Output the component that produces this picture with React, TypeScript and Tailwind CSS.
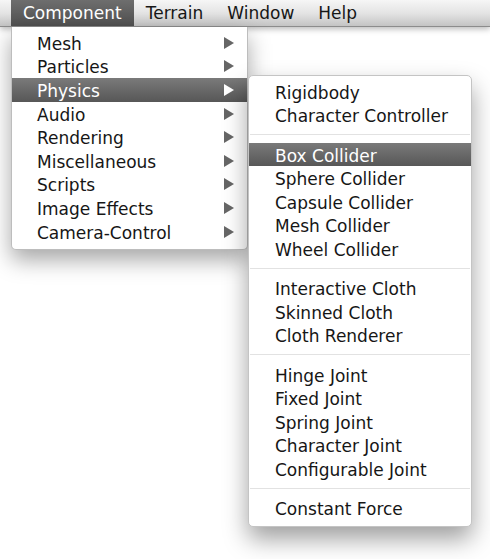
import React from 'react';

const barItems = ['Component', 'Terrain', 'Window', 'Help'];

const mainItems = [
    'Mesh',
    'Particles',
    'Physics',
    'Audio',
    'Rendering',
    'Miscellaneous',
    'Scripts',
    'Image Effects',
    'Camera-Control',
];

// groups of the Physics submenu, split by separators
const physicsGroups = [
    ['Rigidbody', 'Character Controller'],
    ['Box Collider', 'Sphere Collider', 'Capsule Collider', 'Mesh Collider', 'Wheel Collider'],
    ['Interactive Cloth', 'Skinned Cloth', 'Cloth Renderer'],
    ['Hinge Joint', 'Fixed Joint', 'Spring Joint', 'Character Joint', 'Configurable Joint'],
    ['Constant Force'],
];

function Arrow({ light }: { light?: boolean }) {
    return (
        <svg width="10" height="12" viewBox="0 0 10 12" className="shrink-0">
            <path d="M0 0 L10 6 L0 12 Z" fill={light ? '#ffffff' : '#666666'} />
        </svg>
    );
}

function Row({ label, active, arrow, pl }: { label: string; active?: boolean; arrow?: boolean; pl: string }) {
    return (
        <div
            className={`h-[23.6px] flex items-center justify-between pr-[13px] ${pl} ${
                active
                    ? 'bg-gradient-to-b from-[#7a7a7a] to-[#575757] text-white'
                    : 'text-[#161616]'
            }`}
        >
            <span className="leading-none pt-[3px]">{label}</span>
            {arrow && <Arrow light={active} />}
        </div>
    );
}

export default function App() {
    return (
        <div className="relative w-[490px] h-[559px] bg-white overflow-hidden font-['DejaVu_Sans',sans-serif] text-[17px]">
            {/* menu bar */}
            <div className="h-[27px] flex items-stretch pl-[11px] bg-gradient-to-b from-[#f6f6f6] via-[#e4e4e4] to-[#c4c4c4] border-b border-[#8c8c8c] shadow-[0_2px_6px_rgba(0,0,0,0.28)]">
                {barItems.map((item, i) => (
                    <div
                        key={item}
                        className={`px-[12px] flex items-center leading-none ${
                            i === 0
                                ? 'bg-gradient-to-b from-[#6e6e6e] to-[#505050] text-white'
                                : 'text-[#161616]'
                        }`}
                    >
                        {item}
                    </div>
                ))}
            </div>

            {/* Component menu */}
            <div className="absolute left-[11px] top-[27px] w-[237px] pt-[4px] pb-[6px] bg-white border border-t-0 border-[#bdbdbd] rounded-b-[5px] shadow-[0_10px_22px_rgba(0,0,0,0.35)]">
                {mainItems.map((item) => (
                    <Row key={item} label={item} active={item === 'Physics'} arrow pl="pl-[25px]" />
                ))}
            </div>

            {/* Physics submenu */}
            <div className="absolute left-[248px] top-[75px] w-[224px] pt-[4px] pb-[6px] bg-white border border-[#c4c4c4] rounded-[5px] shadow-[0_12px_24px_rgba(0,0,0,0.38)]">
                {physicsGroups.map((group, gi) => (
                    <div key={gi}>
                        {gi > 0 && (
                            <div className="h-[15.6px] flex items-center px-[1px]">
                                <div className="h-px w-full bg-[#e2e2e2]" />
                            </div>
                        )}
                        {group.map((item) => (
                            <Row key={item} label={item} active={item === 'Box Collider'} pl="pl-[26px]" />
                        ))}
                    </div>
                ))}
            </div>
        </div>
    );
}
